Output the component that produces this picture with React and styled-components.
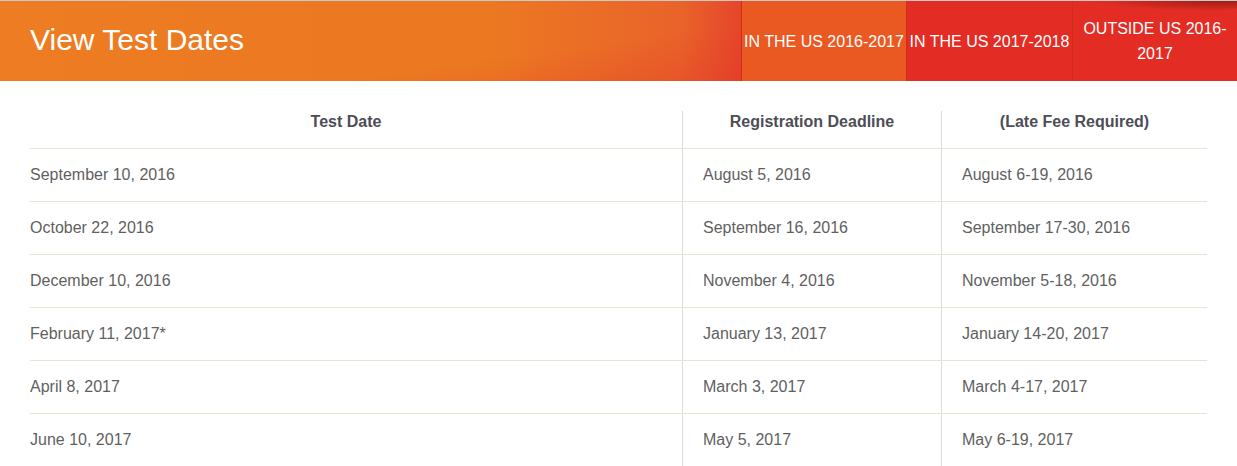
import React from "react";
import styled, { createGlobalStyle } from "styled-components";

const GlobalStyle = createGlobalStyle`
  body {
    margin: 0;
    background: #ffffff;
    font-family: "Liberation Sans", Arial, sans-serif;
  }
`;

const tabs = [
  { label: "IN THE US 2016-2017", active: true },
  { label: "IN THE US 2017-2018" },
  { label: "OUTSIDE US 2016-2017", wrap: true, swoosh: true },
];

const rows = [
  ["September 10, 2016", "August 5, 2016", "August 6-19, 2016"],
  ["October 22, 2016", "September 16, 2016", "September 17-30, 2016"],
  ["December 10, 2016", "November 4, 2016", "November 5-18, 2016"],
  ["February 11, 2017*", "January 13, 2017", "January 14-20, 2017"],
  ["April 8, 2017", "March 3, 2017", "March 4-17, 2017"],
  ["June 10, 2017", "May 5, 2017", "May 6-19, 2017"],
];

const App = () => {
  return (
    <>
      <GlobalStyle />
      <St.Page>
        <St.Banner>
          <St.Title>View Test Dates</St.Title>
          <St.Tabs>
            {tabs.map((t) => (
              <St.Tab key={t.label} $active={t.active} $wrap={t.wrap} $swoosh={t.swoosh}>
                {t.label}
              </St.Tab>
            ))}
          </St.Tabs>
        </St.Banner>
        <St.Table>
          <St.Row $head>
            <St.HeadCell>Test Date</St.HeadCell>
            <St.HeadCell>Registration Deadline</St.HeadCell>
            <St.HeadCell>(Late Fee Required)</St.HeadCell>
          </St.Row>
          {rows.map((r) => (
            <St.Row key={r[0]}>
              {r.map((c) => (
                <St.Cell key={c}>{c}</St.Cell>
              ))}
            </St.Row>
          ))}
        </St.Table>
      </St.Page>
    </>
  );
};

export default App;

const St = {
  Page: styled.div`
    border-top: 1px solid #c9c9c9;
    height: 465px;
    overflow: hidden;
  `,
  Banner: styled.div`
    height: 80px;
    display: flex;
    align-items: stretch;
    justify-content: space-between;
    background:
      linear-gradient(172deg, rgba(236, 122, 34, 0) 50%, rgba(226, 48, 38, 0.7) 100%),
      linear-gradient(90deg, #ed7c22 0%, #ec7822 40%, #e9632a 55%, #e5452a 60%, #e33528 100%);
  `,
  Title: styled.h1`
    margin: 0;
    padding-left: 30px;
    display: flex;
    align-items: center;
    font-size: 30px;
    font-weight: normal;
    color: #ffffff;
    padding-bottom: 2px;
  `,
  Tabs: styled.div`
    display: grid;
    grid-template-columns: 165px 166px 165px;
  `,
  Tab: styled.div`
    position: relative;
    display: flex;
    align-items: center;
    justify-content: center;
    text-align: center;
    padding: ${(p) => (p.$wrap ? "0 10px" : "0")};
    border-left: 1px solid #d22d1c;
    background: ${(p) => (p.$active ? "#eb5922" : "#e22c24")};
    color: #ffffff;
    font-size: 16px;
    line-height: 25px;
    white-space: ${(p) => (p.$wrap ? "normal" : "nowrap")};
    overflow: hidden;
    &::before {
      content: "";
      display: ${(p) => (p.$swoosh ? "block" : "none")};
      position: absolute;
      top: -6px;
      left: 20px;
      right: -30px;
      height: 16px;
      border-radius: 50%;
      background: radial-gradient(ellipse at 75% 30%, rgba(100, 20, 10, 0.6), rgba(160, 30, 20, 0) 70%);
    }
  `,
  Table: styled.div`
    margin: 30px 30px 0 30px;
    display: flex;
    flex-direction: column;
  `,
  Row: styled.div`
    display: grid;
    grid-template-columns: 652px 259px 1fr;
    height: ${(p) => (p.$head ? "37px" : "52px")};
    border-bottom: 1px solid #e8e4d4;
    & > div + div {
      border-left: 1px solid #dcdcdc;
    }
  `,
  HeadCell: styled.div`
    display: flex;
    align-items: flex-start;
    justify-content: center;
    padding: 0 20px;
    font-size: 16px;
    line-height: 22px;
    font-weight: bold;
    color: #4d4d55;
    &:first-child {
      padding-left: 0;
    }
  `,
  Cell: styled.div`
    display: flex;
    align-items: center;
    padding: 0 20px 0;
    font-size: 16px;
    color: #5f5f5f;
    &:first-child {
      padding-left: 0;
    }
  `,
};
